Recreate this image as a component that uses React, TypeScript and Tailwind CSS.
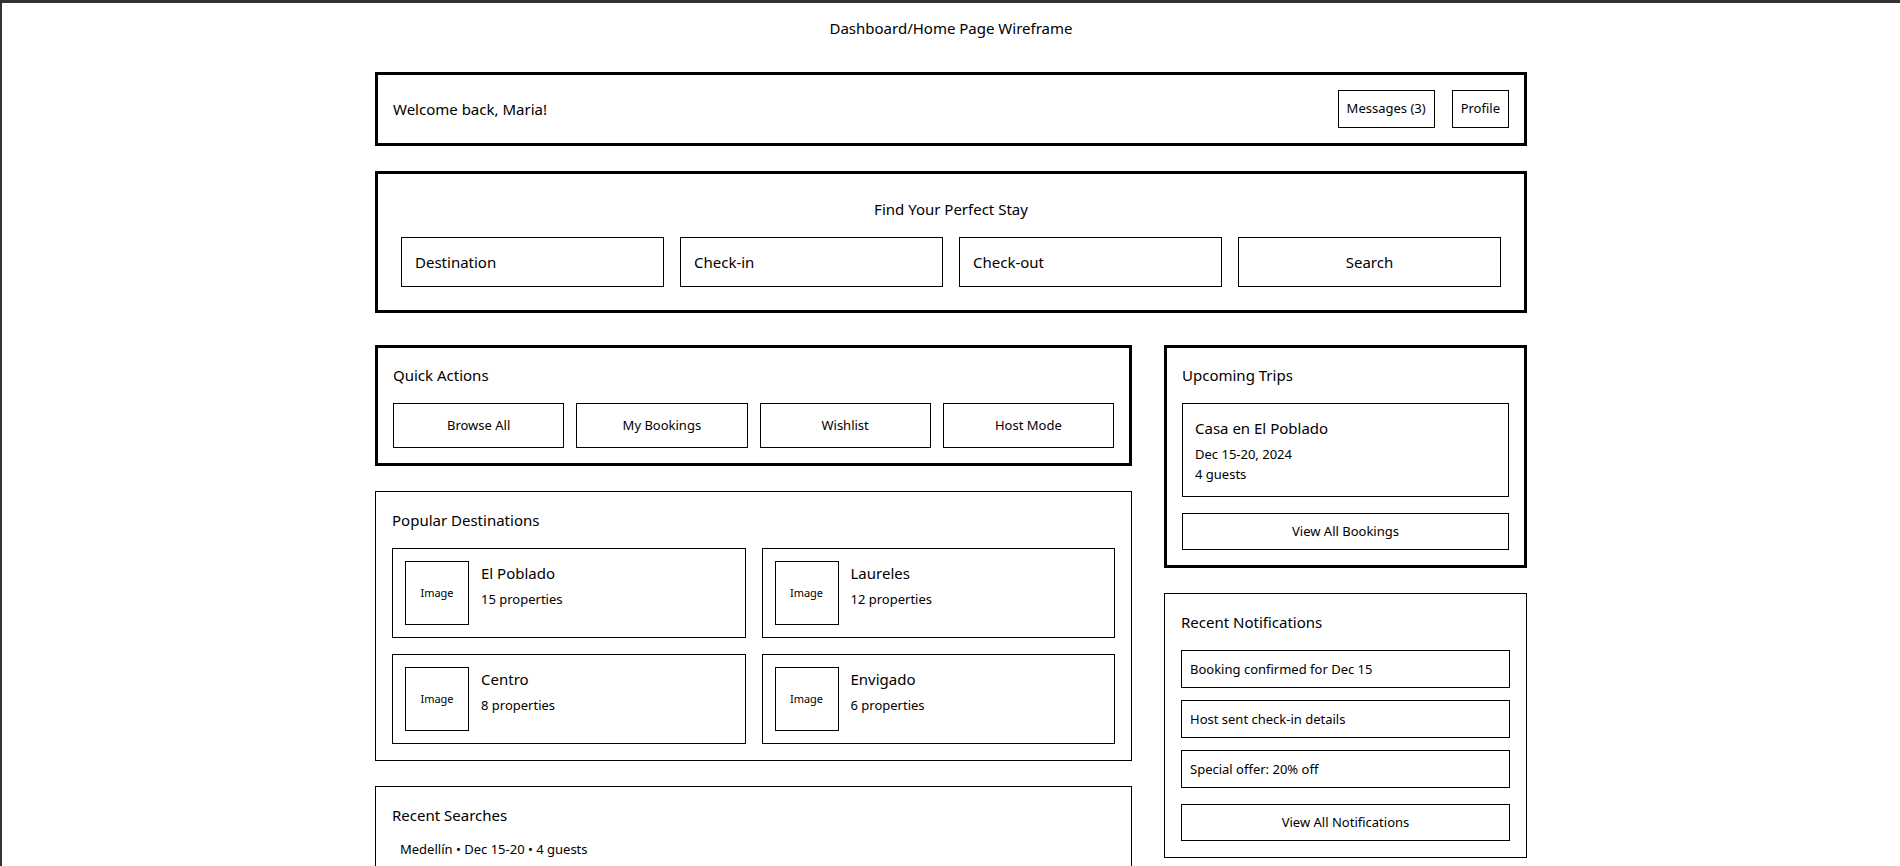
import React from 'react'

const destinations = [
  { name: 'El Poblado', count: '15 properties' },
  { name: 'Laureles', count: '12 properties' },
  { name: 'Centro', count: '8 properties' },
  { name: 'Envigado', count: '6 properties' },
]

const notifications = ['Booking confirmed for Dec 15', 'Host sent check-in details', 'Special offer: 20% off']

export default function App() {
  return (
    <div className="min-h-screen bg-white text-black border-t-[3px] border-l-2 border-[#333] font-['Noto_Sans',sans-serif]">
      <div className="w-[1152px] mx-auto pt-[13px] pb-10">
        {/* Title */}
        <h1 className="text-[15px] leading-6 text-center mb-8">Dashboard/Home Page Wireframe</h1>

        {/* Header */}
        <div className="border-[3px] border-black p-[15px] flex items-center justify-between mb-[25px]">
          <p className="text-[15px]">Welcome back, Maria!</p>
          <div className="flex gap-[17px]">
            <button className="h-[38px] px-2 border border-black text-[13px]">Messages (3)</button>
            <button className="h-[38px] px-2 border border-black text-[13px]">Profile</button>
          </div>
        </div>

        {/* Search */}
        <div className="border-[3px] border-black p-[23px] mb-8">
          <h2 className="text-[15px] leading-6 text-center mb-4">Find Your Perfect Stay</h2>
          <div className="grid grid-cols-4 gap-4">
            <div className="h-[50px] border border-black px-[13px] flex items-center text-[15px]">Destination</div>
            <div className="h-[50px] border border-black px-[13px] flex items-center text-[15px]">Check-in</div>
            <div className="h-[50px] border border-black px-[13px] flex items-center text-[15px]">Check-out</div>
            <button className="h-[50px] border border-black text-[15px]">Search</button>
          </div>
        </div>

        <div className="grid grid-cols-[757px_363px] gap-8 items-start">
          {/* Left column */}
          <div className="flex flex-col gap-[25px]">
            <div className="border-[3px] border-black p-[15px]">
              <h3 className="text-[15px] leading-6 mb-4">Quick Actions</h3>
              <div className="grid grid-cols-4 gap-3">
                {['Browse All', 'My Bookings', 'Wishlist', 'Host Mode'].map((a) => (
                  <button key={a} className="h-[45px] border border-black text-[13px]">{a}</button>
                ))}
              </div>
            </div>

            <div className="border border-black p-4">
              <h3 className="text-[15px] leading-6 mb-4">Popular Destinations</h3>
              <div className="grid grid-cols-2 gap-4">
                {destinations.map((d) => (
                  <div key={d.name} className="border border-black p-3 flex gap-3">
                    <div className="w-16 h-16 border border-black flex items-center justify-center text-[11px] shrink-0">Image</div>
                    <div>
                      <p className="text-[15px] leading-6">{d.name}</p>
                      <p className="text-[13px] leading-5 mt-1">{d.count}</p>
                    </div>
                  </div>
                ))}
              </div>
            </div>

            <div className="border border-black p-4">
              <h3 className="text-[15px] leading-6 mb-1">Recent Searches</h3>
              <div className="p-2 text-[13px] leading-5">Medellín • Dec 15-20 • 4 guests</div>
            </div>
          </div>

          {/* Right column */}
          <div className="flex flex-col gap-[25px]">
            <div className="border-[3px] border-black p-[15px]">
              <h3 className="text-[15px] leading-6 mb-4">Upcoming Trips</h3>
              <div className="border border-black p-3">
                <p className="text-[15px] leading-6">Casa en El Poblado</p>
                <p className="text-[13px] leading-5 mt-1">Dec 15-20, 2024</p>
                <p className="text-[13px] leading-5">4 guests</p>
              </div>
              <button className="w-full h-[37px] border border-black text-[13px] mt-4">View All Bookings</button>
            </div>

            <div className="border border-black p-4">
              <h3 className="text-[15px] leading-6 mb-4">Recent Notifications</h3>
              <div className="flex flex-col gap-3">
                {notifications.map((n) => (
                  <div key={n} className="border border-black p-2 text-[13px] leading-5">{n}</div>
                ))}
              </div>
              <button className="w-full h-[37px] border border-black text-[13px] mt-4">View All Notifications</button>
            </div>
          </div>
        </div>
      </div>
    </div>
  )
}
